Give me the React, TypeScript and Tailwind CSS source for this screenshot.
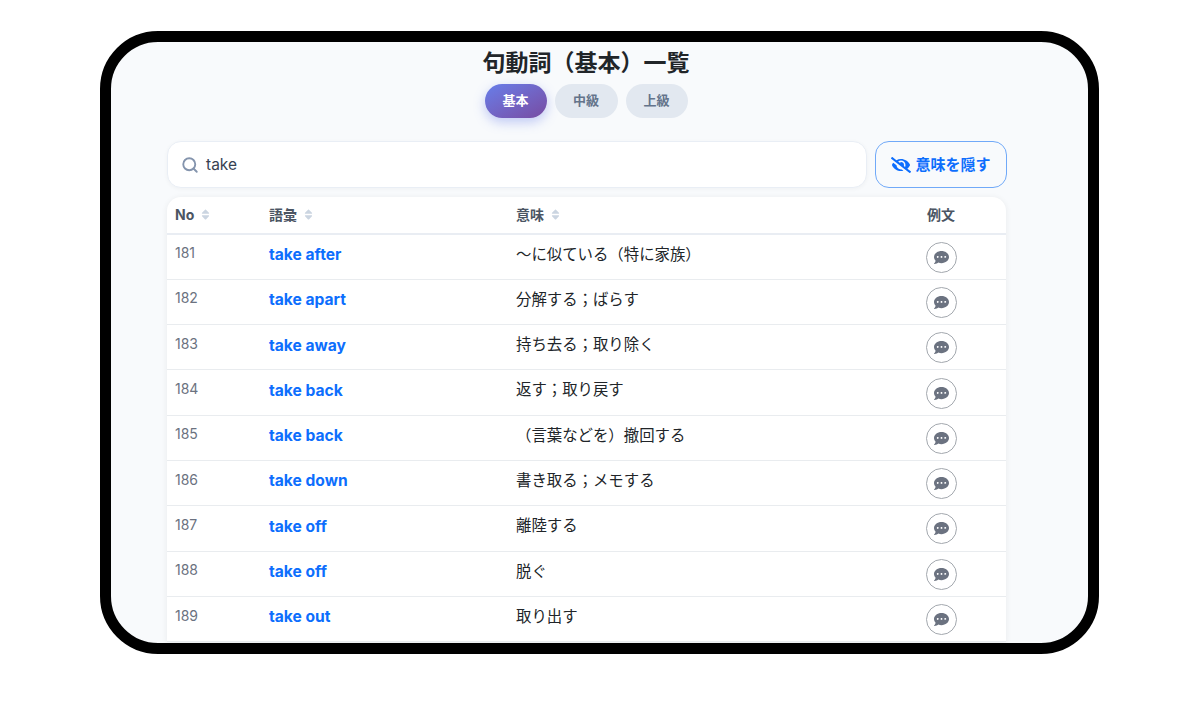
import { Search } from "lucide-react";
import { FaCommentDots, FaEyeSlash, FaSort } from "react-icons/fa";

const rows = [
  ["181", "take after", "〜に似ている（特に家族）"],
  ["182", "take apart", "分解する；ばらす"],
  ["183", "take away", "持ち去る；取り除く"],
  ["184", "take back", "返す；取り戻す"],
  ["185", "take back", "（言葉などを）撤回する"],
  ["186", "take down", "書き取る；メモする"],
  ["187", "take off", "離陸する"],
  ["188", "take off", "脱ぐ"],
  ["189", "take out", "取り出す"],
];

const font = "font-['Inter','Noto_Sans_CJK_JP',sans-serif]";

function SortIcon() {
  return <FaSort className="text-[#cbd5e1] text-[13px] ml-[5px]" />;
}

export default function App() {
  return (
    <div className={`w-[1200px] h-[708px] bg-white pt-[31px] pl-[100px] overflow-hidden ${font}`}>
      <div className="w-[999px] h-[623px] border-[11px] border-black rounded-[58px] bg-[#f8fafc] overflow-hidden">
        <div className="flex flex-col items-center pr-[27px]">
          <h1 className="text-[23px] leading-[32px] mt-[5px] font-bold text-[#212529]">句動詞（基本）一覧</h1>
          <div className="flex gap-2 mt-[5px]">
            <button className="w-[62px] h-[34px] rounded-full bg-gradient-to-br from-[#667eea] to-[#764ba2] text-white text-[13px] font-bold shadow-[0_4px_12px_rgba(102,126,234,0.4)]">基本</button>
            <button className="w-[63px] h-[34px] rounded-full bg-[#e2e8f0] text-[#64748b] text-[13px] font-bold">中級</button>
            <button className="w-[62px] h-[34px] rounded-full bg-[#e2e8f0] text-[#64748b] text-[13px] font-bold">上級</button>
          </div>
        </div>
        <div className="ml-[56px] w-[840px] mt-[23px]">
          <div className="flex gap-[8px] items-center">
            <div className="w-[700px] h-[47px] bg-white border border-[#e9eef5] rounded-[14px] shadow-[0_1px_4px_rgba(0,0,0,0.04)] flex items-center pl-[13px] pt-[1px]">
              <Search className="w-[18px] h-[18px] text-[#8494ad]" strokeWidth={2.5} />
              <span className="ml-[7px] text-[15.5px] text-[#374151]">take</span>
            </div>
            <button className="w-[132px] h-[47px] pt-[1px] shrink-0 border-[1.5px] border-[#70a9f8] rounded-[14px] bg-[#f8fafc] flex items-center justify-center gap-[4px] text-[#0d6efd] text-[15px] font-bold">
              <FaEyeSlash className="text-[20px]" />
              意味を隠す
            </button>
          </div>
          <div className="mt-[9px] w-[839px] bg-white rounded-t-[14px] shadow-[0_1px_6px_rgba(0,0,0,0.07)]">
            <div className="flex items-center h-[37.5px] pb-[1px] border-b-2 border-[#e9edf3] text-[14px] font-bold text-[#4b5563]">
              <div className="w-[102px] pl-[8px] flex items-center">No<SortIcon /></div>
              <div className="w-[247px] flex items-center">語彙<SortIcon /></div>
              <div className="w-[411px] flex items-center">意味<SortIcon /></div>
              <div>例文</div>
            </div>
            {rows.map((r, i) => (
              <div key={i} className="flex items-center h-[45.3px] border-b border-[#e9ecef]">
                <div className="w-[102px] pl-[8px] text-[14px] text-[#6b7280] -mt-[8px]">{r[0]}</div>
                <div className="w-[247px] text-[15.6px] font-bold text-[#0d6efd] -mt-[4px]">{r[1]}</div>
                <div className="w-[410px] text-[15.4px] text-[#212529] -mt-[5px]">{r[2]}</div>
                <div className="w-[31px] h-[31px] mt-[1px] rounded-full border-[1.5px] border-[#a3a8ae] flex items-center justify-center text-[#6b7280] text-[15px]">
                  <FaCommentDots />
                </div>
              </div>
            ))}
          </div>
        </div>
      </div>
    </div>
  );
}
